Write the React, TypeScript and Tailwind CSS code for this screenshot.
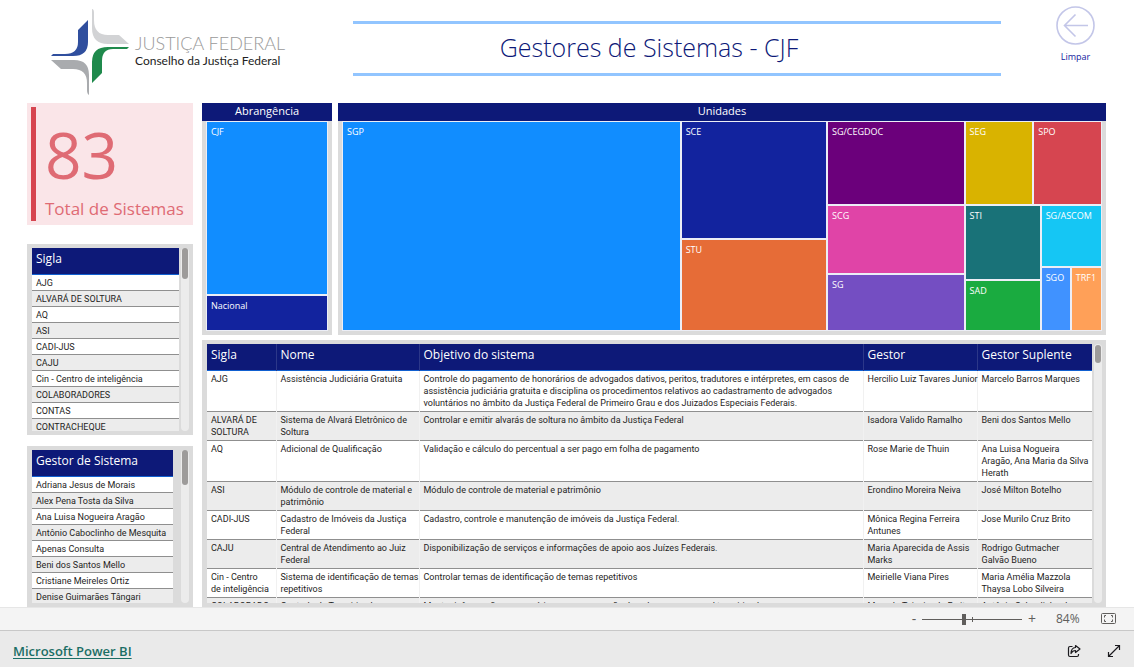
import { useState } from 'react'

type Cell = { label: string; color: string; size: number }
type Split = { dir: 'row' | 'col'; size: number; children: Node[] }
type Node = Cell | Split

const abrangencia: Split = {
  dir: 'col',
  size: 1,
  children: [
    { label: 'CJF', color: '#118dff', size: 173 },
    { label: 'Nacional', color: '#12239e', size: 34 },
  ],
}

const unidades: Split = {
  dir: 'row',
  size: 1,
  children: [
    { label: 'SGP', color: '#118dff', size: 338 },
    {
      dir: 'col',
      size: 145,
      children: [
        { label: 'SCE', color: '#12239e', size: 116 },
        { label: 'STU', color: '#e66c37', size: 90 },
      ],
    },
    {
      dir: 'col',
      size: 136,
      children: [
        { label: 'SG/CEGDOC', color: '#6b007b', size: 82 },
        { label: 'SCG', color: '#e044a7', size: 68 },
        { label: 'SG', color: '#744ec2', size: 55 },
      ],
    },
    {
      dir: 'col',
      size: 136,
      children: [
        {
          dir: 'row',
          size: 82,
          children: [
            { label: 'SEG', color: '#d9b300', size: 67 },
            { label: 'SPO', color: '#d64550', size: 67 },
          ],
        },
        {
          dir: 'row',
          size: 125,
          children: [
            {
              dir: 'col',
              size: 75,
              children: [
                { label: 'STI', color: '#197278', size: 74 },
                { label: 'SAD', color: '#1aab40', size: 49 },
              ],
            },
            {
              dir: 'col',
              size: 60,
              children: [
                { label: 'SG/ASCOM', color: '#15c6f4', size: 61 },
                {
                  dir: 'row',
                  size: 62,
                  children: [
                    { label: 'SGO', color: '#4092ff', size: 29 },
                    { label: 'TRF1', color: '#ffa058', size: 30 },
                  ],
                },
              ],
            },
          ],
        },
      ],
    },
  ],
}

const siglas = [
  'AJG',
  'ALVARÁ DE SOLTURA',
  'AQ',
  'ASI',
  'CADI-JUS',
  'CAJU',
  'Cin - Centro de inteligência',
  'COLABORADORES',
  'CONTAS',
  'CONTRACHEQUE',
]

const gestores = [
  'Adriana Jesus de Morais',
  'Alex Pena Tosta da Silva',
  'Ana Luisa Nogueira Aragão',
  'Antônio Caboclinho de Mesquita',
  'Apenas Consulta',
  'Beni dos Santos Mello',
  'Cristiane Meireles Ortiz',
  'Denise Guimarães Tângari',
]

const sistemas = [
  ['AJG', 'Assistência Judiciária Gratuita', 'Controle do pagamento de honorários de advogados dativos, peritos, tradutores e intérpretes, em casos de assistência judiciária gratuita e disciplina os procedimentos relativos ao cadastramento de advogados voluntários no âmbito da Justiça Federal de Primeiro Grau e dos Juizados Especiais Federais.', 'Hercilio\u00a0Luiz\u00a0Tavares\u00a0Junior', 'Marcelo Barros Marques'],
  ['ALVARÁ DE SOLTURA', 'Sistema de Alvará Eletrônico de Soltura', 'Controlar e emitir alvarás de soltura no âmbito da Justiça Federal', 'Isadora Valido Ramalho', 'Beni dos Santos Mello'],
  ['AQ', 'Adicional de Qualificação', 'Validação e cálculo do percentual a ser pago em folha de pagamento', 'Rose Marie de Thuin', 'Ana Luisa Nogueira\nAragão, Ana Maria da Silva Herath'],
  ['ASI', 'Módulo de controle de material e patrimônio', 'Módulo de controle de material e patrimônio', 'Erondino Moreira Neiva', 'José Milton Botelho'],
  ['CADI-JUS', 'Cadastro de Imóveis da Justiça\nFederal', 'Cadastro, controle e manutenção de imóveis da Justiça Federal.', 'Mônica Regina Ferreira\nAntunes', 'Jose Murilo Cruz Brito'],
  ['CAJU', 'Central de Atendimento ao Juiz\nFederal', 'Disponibilização de serviços e informações de apoio aos Juízes Federais.', 'Maria Aparecida de Assis\nMarks', 'Rodrigo Gutmacher\nGalvão Bueno'],
  ['Cin - Centro\nde inteligência', 'Sistema de identificação de temas repetitivos', 'Controlar temas de identificação de temas repetitivos', 'Meirielle Viana Pires', 'Maria Amélia Mazzola\nThaysa Lobo Silveira'],
  ['COLABORADO\nRES', 'Controle de Terceirizados', 'Manter informações necessárias para a execução dos planos ao pessoal terceirizado', 'Marcelo Teixeira de Freitas', 'Antônio Caboclinho de Mesquita'],
]

function TreeNode({ node }: { node: Node }) {
  if ('children' in node) {
    return (
      <div
        className={`flex min-h-0 min-w-0 basis-0 gap-0.5 ${node.dir === 'row' ? 'flex-row' : 'flex-col'}`}
        style={{ flexGrow: node.size }}
      >
        {node.children.map((child, i) => (
          <TreeNode key={i} node={child} />
        ))}
      </div>
    )
  }
  return (
    <div
      className="min-h-0 min-w-0 basis-0 overflow-hidden"
      style={{ flexGrow: node.size, backgroundColor: node.color }}
    >
      <p className="pt-[3px] pl-1 text-[9px] leading-[14px] font-medium whitespace-nowrap text-white">{node.label}</p>
    </div>
  )
}

function Treemap({ title, root, className }: { title: string; root: Split; className: string }) {
  return (
    <section className={`flex h-[232px] flex-col bg-[#dbdbdb] ${className}`}>
      <h2 className="h-[18px] bg-[#0d1978] text-center text-[11px] leading-4 font-medium text-white">{title}</h2>
      <div className="mx-1 mb-1 flex min-h-0 flex-1 bg-[#eceef6] p-px">
        <TreeNode node={root} />
      </div>
    </section>
  )
}

function Scrollbar({ thumb }: { thumb: string }) {
  return (
    <div className="w-2 shrink-0 rounded-full bg-[#ececec] px-px">
      <div className={`rounded-full bg-[#9d9b9a] ${thumb}`}></div>
    </div>
  )
}

function ListTable({ title, items }: { title: string; items: string[] }) {
  return (
    <table className="w-full text-left">
      <thead>
        <tr className="h-[26px] border-b border-[#1160d0] bg-[#0d1978] align-top">
          <th className="px-1 pt-px text-xs leading-5 font-medium text-white">{title}</th>
        </tr>
      </thead>
      <tbody>
        {items.map((item) => (
          <tr key={item} className="h-4 border-b border-[#8f8f8f] odd:bg-white even:bg-[#ececec]">
            <td className="px-1 pt-px font-[Roboto] text-[9px] leading-[14px] whitespace-nowrap">{item}</td>
          </tr>
        ))}
      </tbody>
    </table>
  )
}

function Logo() {
  return (
    <div className="flex w-[326px] shrink-0 pt-2 pl-[51px]">
      <svg width="78" height="87" viewBox="0 0 78 87" aria-hidden="true">
        <path d="M37 12 L27 22 V34 Q27 46 14 46 H2 L0 48 H22 Q37 48 37 34 Z" fill="#304f9e" />
        <path d="M41 1 Q43 1 43 5 V12 Q43 27 57 27 H68 L78 36 H57 Q41 36 41 20 Z" fill="#d2d3d5" />
        <path d="M78 39 H57 Q41 39 41 54 V75 L51 65 V53 Q51 41 62 41 H76 Z" fill="#1f8a4c" />
        <path d="M0 52 H23 Q38 52 38 67 V87 Q36 86 36 82 V75 Q36 61 22 61 H10 Z" fill="#a9abae" />
      </svg>
      <div className="flex-1 pt-[23px] pl-1.5">
        <p className="font-[Lato] text-lg leading-6 font-light whitespace-nowrap text-[#9a9a9a]">JUSTIÇA FEDERAL</p>
        <p className="font-[Lato] text-xs leading-3 whitespace-nowrap text-[#222]">Conselho da Justiça Federal</p>
      </div>
    </div>
  )
}

export default function App() {
  const [zoom, setZoom] = useState(84)

  return (
    <div className="flex h-screen flex-col bg-white font-['Open_Sans',sans-serif] text-[#252423]">
      <main className="flex min-h-0 flex-1 flex-col overflow-hidden">
        {/* Header */}
        <header className="flex h-[103px] shrink-0 items-start">
          <Logo />
          <div className="mt-[21px] ml-[27px] flex h-[55px] flex-1 justify-center border-y-3 border-[#92c5ff]">
            <h1 className="pt-[7px] pr-14 text-[25px] leading-8 font-light text-[#0d1978]">Gestores de Sistemas - CJF</h1>
          </div>
          <button className="mt-1.5 mr-[39px] ml-[55px] flex flex-col items-center gap-1 text-[9px] leading-4 text-[#12239e]">
            <svg width="39" height="39" viewBox="0 0 39 39" fill="none" stroke="#c3c6e8" strokeWidth="1.6" aria-hidden="true">
              <circle cx="19.5" cy="19.5" r="18.5" />
              <path d="M32 19.5 H9 M19.5 8.500 L8.500 19.500 L19.500 30.500" />
            </svg>
            Limpar
          </button>
        </header>

        <div className="flex min-h-0 flex-1 gap-[9px] pr-7 pl-[27px]">
          {/* Filters */}
          <div className="flex w-[166px] shrink-0 flex-col">
            <section className="flex h-[122px] shrink-0 bg-[#fae5e8] p-1 pr-0">
              <div className="w-[5px] bg-[#d64550]"></div>
              <div className="flex flex-col justify-end pl-[9px] text-[#df6b74]">
                <strong className="text-[64px] leading-[72px] font-normal">83</strong>
                <span className="pt-1.5 text-[17px] leading-6 whitespace-nowrap">Total de Sistemas</span>
              </div>
            </section>
            <section className="mt-[19px] flex h-[191px] shrink-0 gap-0.5 bg-[#dbdbdb] py-1 pr-1 pl-[5px]">
              <div className="flex-1 overflow-hidden">
                <ListTable title="Sigla" items={siglas} />
              </div>
              <Scrollbar thumb="h-[31px]" />
            </section>
            <section className="mt-[11px] flex min-h-0 flex-1 gap-2 bg-[#dbdbdb] py-1 pr-1 pl-[5px]">
              <div className="flex-1 overflow-hidden">
                <ListTable title="Gestor de Sistema" items={gestores} />
              </div>
              <Scrollbar thumb="h-[35px]" />
            </section>
          </div>

          <div className="flex min-w-0 flex-1 flex-col gap-[5px]">
            <div className="flex gap-1.5">
              <Treemap title="Abrangência" root={abrangencia} className="w-[130px] shrink-0" />
              <Treemap title="Unidades" root={unidades} className="flex-1" />
            </div>

            {/* Systems table */}
            <section className="flex min-h-0 flex-1 gap-0.5 bg-[#dbdbdb] py-1 pr-1 pl-[5px]">
              <div className="flex-1 overflow-hidden">
                <table className="w-full table-fixed text-left">
                  <colgroup>
                    <col className="w-[69px]" />
                    <col className="w-[143px]" />
                    <col />
                    <col className="w-[114px]" />
                    <col className="w-[115px]" />
                  </colgroup>
                  <thead>
                    <tr className="h-[26px] border-b border-[#1160d0] bg-[#0d1978] align-top">
                      {['Sigla', 'Nome', 'Objetivo do sistema', 'Gestor', 'Gestor Suplente'].map((col) => (
                        <th key={col} className="border-r border-[#2c3789] px-1 pt-px text-xs leading-5 font-medium text-white last:border-r-0">
                          {col}
                        </th>
                      ))}
                    </tr>
                  </thead>
                  <tbody>
                    {sistemas.map((row) => (
                      <tr key={row[0]} className="border-b border-[#8f8f8f] align-top odd:bg-white even:bg-[#ececec]">
                        {row.map((text, i) => (
                          <td key={i} className="border-r border-r-[#f1f1f1] pt-0.5 pr-0 pb-0.5 pl-1 font-[Roboto] text-[9px] leading-3 whitespace-pre-line last:border-r-0">
                            {text}
                          </td>
                        ))}
                      </tr>
                    ))}
                  </tbody>
                </table>
              </div>
              <Scrollbar thumb="mt-px h-[18px]" />
            </section>
          </div>
        </div>
      </main>

      {/* Zoom bar */}
      <div className="flex h-6 shrink-0 items-center justify-end border-y border-t-[#e6e6e6] border-b-[#c8c8c8] bg-[#f4f4f4] pr-[18px] text-xs text-[#605e5c]">
        <button aria-label="Diminuir zoom" className="w-3 text-sm leading-4">-</button>
        <div className="relative mr-1 ml-0.5 flex h-4 w-[100px] items-center">
          <span className="absolute left-1/2 h-[5px] w-px bg-[#605e5c]"></span>
          <input
            type="range"
            min={0}
            max={200}
            value={zoom}
            onChange={(e) => setZoom(Number(e.target.value))}
            aria-label="Zoom"
            className="relative h-px w-full appearance-none bg-[#605e5c] [&::-webkit-slider-thumb]:h-[11px] [&::-webkit-slider-thumb]:w-1 [&::-webkit-slider-thumb]:appearance-none [&::-webkit-slider-thumb]:bg-[#605e5c]"
          />
        </div>
        <button aria-label="Aumentar zoom" className="w-3 text-sm leading-4">+</button>
        <span className="ml-[18px] w-7 leading-4">{zoom}%</span>
        <button aria-label="Ajustar à página" className="ml-[17px]">
          <svg width="15" height="12" viewBox="0 0 15 12" fill="none" stroke="#605e5c" aria-hidden="true">
            <rect x="0.5" y="0.5" width="14" height="10" rx="1" />
            <path d="M5 2.500 H3.500 V4.500 M10 2.500 H11.500 V4.500 M5 8.500 H3.500 V6.500 M10 8.500 H11.500 V6.500" />
          </svg>
        </button>
      </div>

      {/* Footer */}
      <footer className="flex h-9 shrink-0 items-center justify-between bg-[#eaeaea] pt-1 pr-[13px] pl-[13px]">
        <a href="#" className="text-[13px] leading-5 font-semibold text-[#1b6e65] underline underline-offset-2">Microsoft Power BI</a>
        <div className="flex items-center gap-[26px]">
          <button aria-label="Compartilhar">
            <svg width="14" height="14" viewBox="0 0 14 14" fill="none" stroke="#1c1b1f" strokeWidth="1.2" strokeLinejoin="round" aria-hidden="true">
              <path d="M5.500 2.500 H3 Q1.500 2.500 1.500 4 V11 Q1.500 12.500 3 12.500 H10 Q11.500 12.500 11.500 11 V10" />
              <path d="M8.500 1.500 L13 5 L8.500 8.500 V6.500 Q5.500 6.500 4 9.500 Q4 4 8.500 3.500 Z" />
            </svg>
          </button>
          <button aria-label="Tela inteira">
            <svg width="14" height="14" viewBox="0 0 14 14" fill="none" stroke="#1c1b1f" strokeWidth="1.2" aria-hidden="true">
              <path d="M1.500 12.500 L12.500 1.500 M8 1.500 H12.500 V6 M1.500 8 V12.500 H6" />
            </svg>
          </button>
        </div>
      </footer>
    </div>
  )
}
